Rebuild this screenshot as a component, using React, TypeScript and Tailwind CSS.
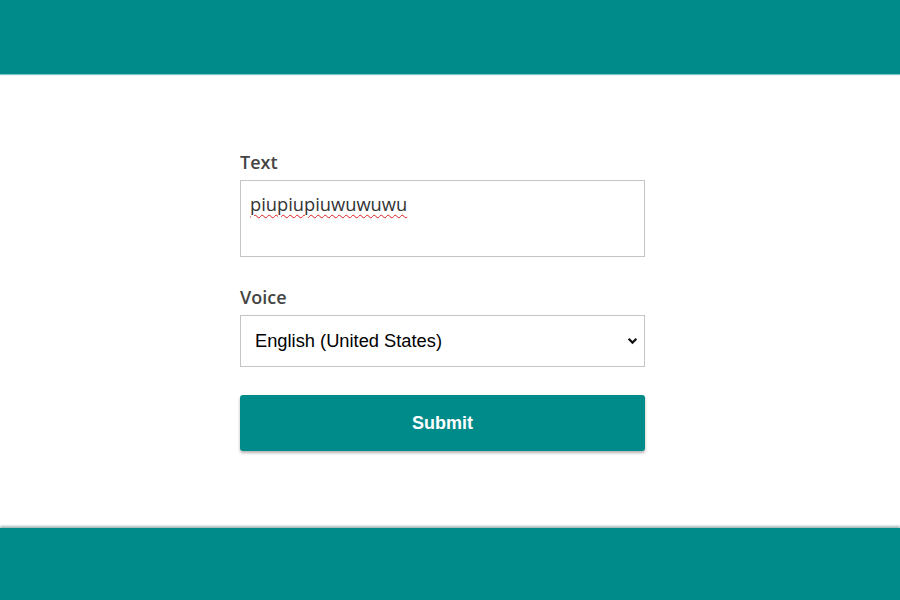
import React from "react";

export default function App() {
  return (
    <div className="flex h-[600px] w-[900px] flex-col bg-white font-['Open_Sans',sans-serif]">
      {/* Header */}
      <header className="h-[74px] shrink-0 bg-[#008b8b] shadow-[0_1px_1px_rgba(0,139,139,0.5)]" />

      {/* Form */}
      <main className="flex flex-1 pl-[240px] pt-[78px]">
        <form className="flex w-[405px] flex-col">
          <label className="mb-[8px] text-[18px] font-semibold leading-[20px] text-[#444]">
            Text
          </label>
          <textarea
            defaultValue="piupiupiuwuwuwu"
            className="h-[77px] w-full resize-none border border-[#c4c4c4] px-[9px] pt-[11px] text-[18.3px] leading-[24px] text-[#333] underline decoration-[#e02020] decoration-wavy decoration-1 underline-offset-[3px] outline-none"
          />
          <label className="mb-[8px] mt-[30px] text-[18px] font-semibold leading-[20px] text-[#444]">
            Voice
          </label>
          <div className="relative">
            <select className="h-[52px] w-full appearance-none border border-[#c4c4c4] bg-white pl-[14px] font-['Liberation_Sans',sans-serif] text-[18.3px] text-black outline-none">
              <option>English (United States)</option>
            </select>
            <svg
              className="pointer-events-none absolute right-[7px] top-1/2 h-[11px] w-[11px] -translate-y-1/2"
              viewBox="0 0 10 10"
              fill="none"
              stroke="#111"
              strokeWidth="2"
            >
              <path d="M1.5 3 L5 6.5 L8.5 3" />
            </svg>
          </div>
          <button
            type="button"
            className="mt-[28px] h-[56px] w-full rounded-[3px] bg-[#008b8b] font-['Liberation_Sans',sans-serif] text-[18px] font-bold text-white shadow-[0_2px_3px_rgba(0,0,0,0.3)]"
          >
            Submit
          </button>
        </form>
      </main>

      {/* Footer */}
      <footer className="h-[72px] shrink-0 bg-[#008b8b] shadow-[0_-2px_2px_rgba(0,60,60,0.35)]" />
    </div>
  );
}
